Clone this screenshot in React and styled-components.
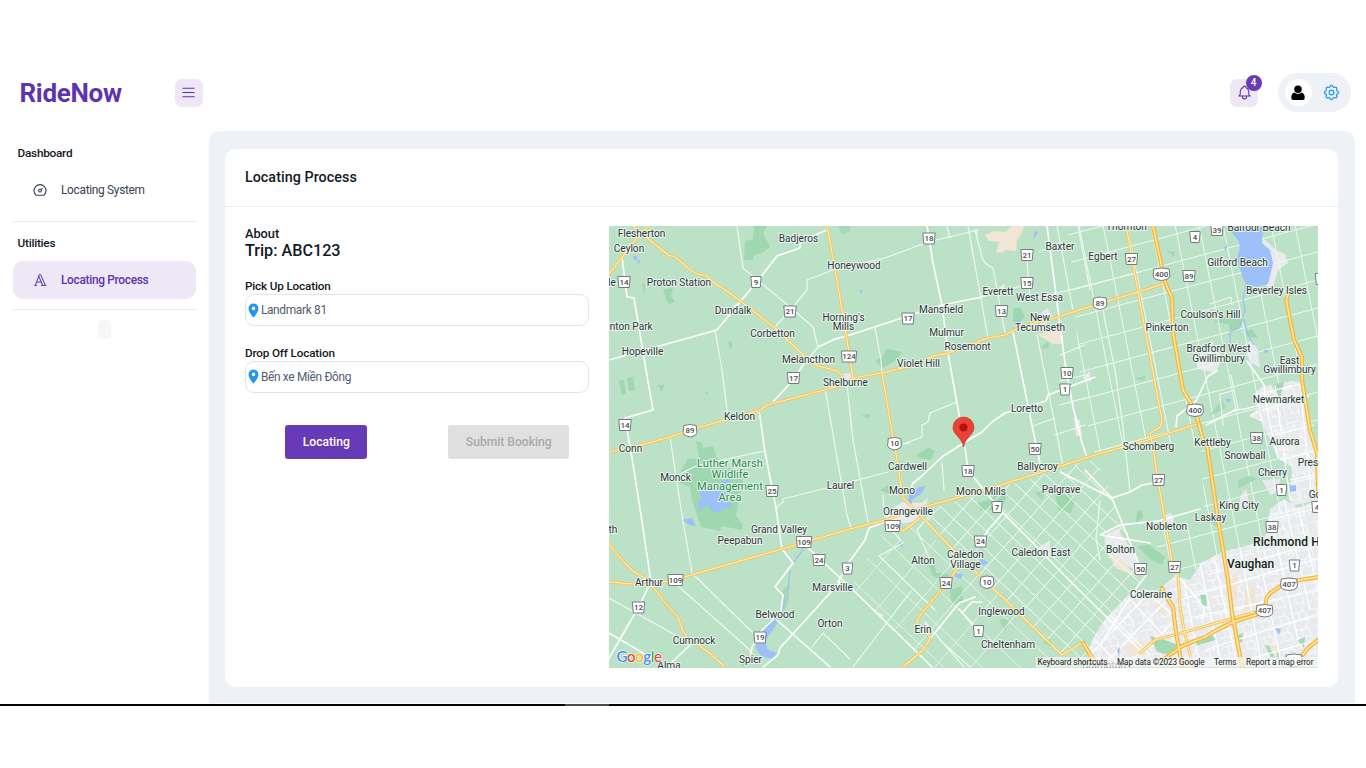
import React from "react";
import styled, { createGlobalStyle } from "styled-components";
import { TbMenu2, TbBell, TbSettings, TbDashboard, TbTypography } from "react-icons/tb";
import { MdLocationOn } from "react-icons/md";

const GlobalStyle = createGlobalStyle`
  *, *::before, *::after { box-sizing: border-box; }
  body { margin: 0; background: #fff; font-family: Roboto, "Liberation Sans", sans-serif; color: #121926; }
  h1, h2, h3, p { margin: 0; }
  button { font-family: inherit; border: 0; padding: 0; }
`;

const Screen = styled.div`
  width: 1366px;
  height: 768px;
  overflow: hidden;
  padding-top: 54px;
  display: flex;
  flex-direction: column;
  background: #fff;
`;
const Header = styled.header`
  height: 77.4px;
  flex: none;
  display: flex;
  align-items: center;
  padding: 0 15px 0 19.5px;
`;
const Brand = styled.h1`
  width: 155px;
  font-size: 26px;
  line-height: 30px;
  font-weight: 700;
  letter-spacing: -0.3px;
  color: #5e35b1;
`;
const IconButton = styled.button`
  position: relative;
  width: 28px;
  height: 28px;
  border-radius: 7px;
  background: #ede7f6;
  color: #5e35b1;
  display: flex;
  align-items: center;
  justify-content: center;
`;
const Spacer = styled.div`flex: 1;`;
const Badge = styled.span`
  position: absolute;
  top: -4px;
  right: -3.5px;
  width: 16px;
  height: 16px;
  border-radius: 50%;
  background: #673ab7;
  color: #fff;
  font-size: 10px;
  line-height: 16px;
  font-weight: 500;
  text-align: center;
`;
const Profile = styled.div`
  width: 73.5px;
  height: 39px;
  margin-left: 19.5px;
  padding: 0 10.5px 0 7px;
  border-radius: 20px;
  background: #eef2f6;
  color: #2196f3;
  display: flex;
  align-items: center;
  justify-content: space-between;
`;
const Avatar = styled.div`
  width: 27px;
  height: 27px;
  border-radius: 50%;
  background: #fff;
  display: grid;
  place-items: center;
`;
const Body = styled.div`
  height: 572.6px;
  flex: none;
  display: flex;
`;
const Sidebar = styled.nav`
  width: 209px;
  flex: none;
  display: flex;
  flex-direction: column;
  padding: 13px 13px 0;
`;
const GroupTitle = styled.h3`
  font-size: 11.8px;
  line-height: 18px;
  font-weight: 500;
  letter-spacing: -0.25px;
  padding-left: 4.5px;
  color: #121926;
`;
const NavItem = styled.a`
  height: 38px;
  margin-top: 9px;
  padding-left: 19px;
  border-radius: 10px;
  display: flex;
  align-items: center;
  gap: 13px;
  font-size: 11.9px;
  letter-spacing: -0.31px;
  font-weight: ${(p) => (p.$active ? 500 : 400)};
  color: ${(p) => (p.$active ? "#5e35b1" : "#364152")};
  background: ${(p) => (p.$active ? "#ede7f6" : "transparent")};
`;
const Divider = styled.hr`
  width: 100%;
  height: 1px;
  border: 0;
  margin: ${(p) => p.$top}px 0 12px;
  background: #e6ebf1;
`;
const Chip = styled.span`
  width: 13px;
  height: 19px;
  margin: -2.5px 0 0 85px;
  border-radius: 5px;
  background: #f7f7f7;
`;
const Main = styled.main`
  width: 1145.6px;
  height: 572px;
  border-radius: 10px 10px 0 0;
  background: #eef2f6;
  padding: 17.2px 17px 0 16.3px;
`;
const Card = styled.section`
  height: 538.5px;
  border-radius: 10px;
  background: #fff;
  overflow: hidden;
`;
const CardHeader = styled.div`
  height: 58.5px;
  padding: 0 19.6px;
  border-bottom: 1px solid #e9eef4;
  display: flex;
  align-items: center;
`;
const CardTitle = styled.h2`
  font-size: 14.3px;
  font-weight: 500;
  letter-spacing: 0.06px;
`;
const CardBody = styled.div`
  display: flex;
  padding: 19px 19px 0 19.6px;
  gap: 19.5px;
`;
const Form = styled.div`
  width: 344.5px;
  flex: none;
`;
const About = styled.p`
  font-size: 12.8px;
  line-height: 16px;
  font-weight: 500;
`;
const Trip = styled.h3`
  font-size: 16.2px;
  line-height: 17px;
  font-weight: 500;
`;
const Field = styled.div`margin-top: ${(p) => p.$top}px;`;
const Label = styled.label`
  display: block;
  font-size: 11.7px;
  line-height: 15px;
  font-weight: 500;
  letter-spacing: -0.14px;
`;
const Input = styled.div`
  height: 32px;
  border: 1px solid #e3e5e8;
  border-radius: 9px;
  display: flex;
  align-items: center;
  font-size: 11.9px;
  letter-spacing: -0.32px;
  color: #525b6b;
  svg { color: #2196f3; margin: 0 -1px 0 -1px; }
`;
const Actions = styled.div`
  display: flex;
  gap: 81px;
  margin: 32px 0 0 40.4px;
`;
const Button = styled.button`
  width: ${(p) => p.$width}px;
  height: 34.5px;
  border-radius: 3px;
  font-size: 12.1px;
  font-weight: 500;
  color: ${(p) => (p.disabled ? "#a9a9a9" : "#fff")};
  background: ${(p) => (p.disabled ? "#e0e0e0" : "#673ab7")};
`;
const MapFrame = styled.div`
  width: 709.5px;
  height: 441.5px;
  overflow: hidden;
  svg { display: block; }
`;
const Taskbar = styled.div`
  height: 2px;
  flex: none;
  background: #050505;
  padding-left: 565px;
`;
const TaskbarMark = styled.div`
  width: 44px;
  height: 2px;
  background: #4b4e4e;
`;

const highways = [
  "M633 226L647 238L668 255L675 257L681 262L690 270L698 274L707 276L715 284L727 291L752 310L775 328L800 352L812 363L818 366L838 371L842 376L843 385",
  "M648 226L636 239L609 274",
  "M827 226L837 280L847 340L853 378",
  "M609 452L637 446L670 437L690 430L728 419L757 411L762 409L767 405L843 385L853 378L882 373L898 369L912 366L933 356L948 353L988 338L1005 335L1022 326L1048 320L1095 305L1138 292L1166 283",
  "M882 373L893 438L895 447L903 498L913 508L921 516L960 557L995 590L1062 655L1080 644Q1084 643 1090 658",
  "M609 582L633 584L650 585L677 579L782 549L850 529L885 520L913 511L920 508L978 492L1042 472L1095 455L1148 440L1200 423",
  "M609 543L615 552L625 563L634 572L643 577L650 584L657 592L666 604L678 617L683 631L688 638L700 646L713 656L725 667",
  "M920 518L910 526L903 531L893 529",
  "M958 568L945 585L918 618L917 624L930 637L929 641L923 650L903 667",
  "M1127 230L1138 292L1162 420L1160 427L1150 433L1152 442L1158 480L1173 567L1178 573L1180 607L1184 630L1193 667",
  "M1140 653L1155 640L1185 632L1255 612",
];
const freeways = [
  "M1153 226L1165 282L1172 298L1173 333L1183 390L1195 410L1203 440L1207 445L1218 520L1228 580L1232 613L1242 667",
  "M1288 295Q1286 298 1287 304L1294 340L1302 357L1302 380L1310 430L1317 453L1318 490",
  "M1163 660L1182 646L1205 637L1217 630L1233 622L1265 612L1266 601Q1267 594 1275 590L1285 583L1300 580L1318 577",
  "M1162 588L1165 595L1173 607L1176 632L1182 667",
  "M1083 643L1095 662",
  "M1301 657L1308 648L1318 640",
];
const roads = [
  "M622 257L627 297L634 298L646 370L653 410L625 418L632 458L641 515L651 582L638 608L609 658",
  "M609 360L717 330L740 302L760 278L777 256L800 248L801 241L827 230",
  "M818 347L835 339L850 335L902 318L942 305L982 297",
  "M803 365L794 379L773 402",
  "M759 410L765 452L776 508L782 549L793 563L775 587L783 595L781 612L762 630L752 647L751 655",
  "M807 547L850 587L932 667",
  "M840 582L780 648L778 655L763 667",
  "M777 620L830 667",
  "M927 226L933 263L942 305L948 353L960 420L963 443",
  "M1047 226L1065 363L1073 407L1082 443L1087 457",
  "M1013 332L1035 440L1042 472",
  "M1095 377L1048 395L1046 401L1005 413L992 422L982 432L965 442L942 457L922 476L913 483L909 493",
  "M965 447L968 470L992 500L1003 513L1025 535L1072 583L1140 650",
  "M1003 513L989 529L981 541",
  "M975 597L959 603L930 639M959 609L978 631M982 602L972 602L962 613",
  "M913 512L869 528L865 540L847 565L838 582",
  "M690 645L667 667M609 633L655 660",
  "M1206 425L1235 410L1245 409L1260 405M1176 427L1177 416L1196 401L1208 376L1217 371",
  "M1247 361L1264 385L1267 410M1060 472L1112 498L1140 567M1085 470L1112 498",
  "M1150 543L1100 535L1120 525L1158 521L1200 509M1146 575L1135 590L1100 645",
  "M1176 575L1190 590L1204 608L1203 618M1112 498L1130 492L1142 485L1159 482",
];
const lanes = [
  "M737 226L743 268L790 307L813 327L818 347L801 368",
  "M715 330L722 370L728 419",
  "M833 270L807 280L807 290L793 307L775 327",
  "M670 437L682 515L692 573L753 633",
  "M677 585L750 650L752 656",
  "M823 633L812 647M823 633L850 659",
  "M609 598L688 642",
  "M825 388L847 515L851 528",
  "M847 385L853 440L868 522",
  "M776 508L783 502L783 499L850 482L888 472",
  "M699 465L765 451M668 480L696 466",
  "M845 267L885 258L928 242L978 230M947 226L950 238",
  "M968 226L988 338M975 230L982 257Q984 264 993 268L1005 333",
  "M982 297L1032 283M1027 260L1030 300M1040 251L1070 243",
  "M1057 226L1073 310M1078 226L1090 290M1030 300L1140 272",
  "M957 402L930 413L928 422L922 425L922 437L903 444",
  "M1037 335L1058 440L1063 467M1033 426L1055 418M875 328L881 360L882 373",
  "M883 520L903 543L879 556L935 610M883 495L884 510L890 520M911 591L853 667",
  "M942 463L944 490M904 444L910 443M930 515L917 530L930 560M925 622L964 667M940 640L970 667",
  "M1102 296L1104 316L1115 370L1123 427L1130 492M1210 304L1231 297L1232 305",
  "M1220 394L1232 391M1220 395L1223 425M1231 375L1238 409M1100 500L1096 538L1100 560",
  "M1085 345L1060 355M1085 375L1060 381M1085 398L1060 405M1085 425L1055 435",
];
const streets = [
  "M1184 580L1200 667M1200 563L1222 667M1214 556L1236 660M1240 548L1262 667M1256 542L1282 667M1270 515L1298 640M1284 500L1310 610M1298 508L1318 590",
  "M1180 600L1318 558M1190 618L1318 590M1205 650L1318 614M1245 660L1318 640M1208 575L1318 542M1268 520L1318 508",
  "M1095 640L1122 667M1110 615L1150 655M1128 597L1165 637M1145 590L1178 620M1090 655L1150 592M1108 660L1165 602M1130 662L1178 618",
  "M1262 410L1310 396M1255 395L1304 383M1275 385L1290 500M1266 405L1278 458M1275 435L1314 425M1280 460L1318 450M1290 480L1318 474M1300 385L1312 500",
];

const series = (from, to, step, make) => {
  const out = [];
  for (let v = from; v <= to; v += step) out.push(make(v));
  return out.join("");
};
const caledonLines =
  series(925, 1130, 15, (x) => `M${x} ${790 - x * 0.302}l220 208`) +
  series(990, 1370, 25, (x) => `M${x} 450l-230 260`);
const erinLines =
  series(740, 930, 38, (x) => `M${x} 510l190 180`) +
  series(900, 1080, 36, (x) => `M${x} 540l-120 140`);
const simcoeLines =
  series(1060, 1340, 24, (x) => `M${x - 6} 220l70 350`) +
  series(240, 700, 28, (y) => `M1050 ${y}l290 -78`);

const towns = [
  "M1085 667L1092 640L1105 619L1133 590L1158 590L1175 576L1190 580L1201 563L1222 552L1250 545L1266 535L1270 509L1284 499L1298 508L1318 500V667Z",
  "M1261 387L1292 381L1303 382L1311 425L1318 450V500L1290 506L1292 467L1278 458L1262 422L1249 416L1259 408L1253 395Z",
  "M892 509L902 502L922 503L928 497L926 509L913 522L886 525L884 514Z",
  "M1108 533L1119 528L1121 535L1138 558L1136 570L1109 558L1104 540Z",
  "M1196 361L1204 351L1217 346L1222 358L1216 373L1198 369Z",
  "M1262 237L1276 250L1285 254L1288 263L1278 270L1273 288L1266 286Z",
  "M841 374L853 373L857 380L849 386L841 383Z",
  "M1164 515L1171 513L1174 519L1170 531L1162 529ZM1244 345L1252 340L1258 350L1260 368L1250 362Z",
  "M732 306L737 303L740 309ZM973 230L978 229V235ZM998 288L1005 284L1004 293ZM1040 314L1047 308L1054 319L1040 327ZM1082 378L1090 371L1091 382ZM1074 419L1080 420L1082 435L1076 436ZM877 612L883 614L882 619Z",
  "M1240 497L1246 489L1249 502L1240 512ZM1034 551L1050 540V557ZM1262 480L1280 479L1279 492L1270 495Z",
];
const sand = [
  "M985 235L994 231L1005 232L1012 226H1025L1021 234L1017 240L1016 251L1005 250L1003 253L996 252L999 242L989 241Z",
  "M1037 334L1050 332L1056 329L1063 337L1061 344L1053 344Z",
  "M1206 345L1213 340L1214 348L1204 352Z",
  "M1109 553L1120 557L1130 570L1138 577L1115 568Z",
  "M1232 575L1238 570L1237 602L1230 600ZM1245 590L1256 586L1254 605L1244 613ZM1157 602L1164 606L1166 616L1159 612Z",
  "M1123 647L1140 640L1150 653L1130 657ZM1268 644L1278 648L1276 660ZM1287 439L1300 436L1297 450Z",
];
const forest = [
  "M745 241L753 239L754 226H767L763 234L770 247L762 253L754 255L752 260H744Z",
  "M696 441L702 443L703 448L713 446L717 458L728 468L745 470L742 485L736 515L743 525L742 530L722 526L720 531L701 527L697 515L692 500L690 487L680 483L679 474L688 459L699 458Z",
  "M619 381L624 380L626 394L622 395ZM627 378L633 377L635 390L629 391ZM658 386L664 384L662 392Z",
  "M663 290L673 287L671 296L675 302L668 304ZM642 282L645 285L644 296ZM728 341L732 342V349L729 348Z",
  "M875 361L883 356L887 349L902 352L898 359L883 368Z",
  "M917 455L925 450L928 447L935 451L931 460L920 458ZM880 490L888 485L889 494Z",
  "M978 503L990 499L1003 491L1006 499L998 510L980 510Z",
  "M1055 495L1065 492L1075 500L1071 513L1058 510ZM1035 493L1046 490L1042 500Z",
  "M929 564L935 566L936 573L949 574V584L932 575ZM950 590L962 586L963 602L952 606Z",
  "M1013 309L1020 307L1025 317L1018 325L1013 322ZM1043 345L1048 342L1049 348L1042 349Z",
  "M1213 322L1222 317L1237 316L1246 320L1237 330L1229 331V324ZM1245 332L1252 329L1258 338L1248 337Z",
  "M1137 546L1149 545L1165 557L1162 565L1150 559ZM1137 512L1142 510L1143 518L1136 523Z",
  "M1150 636L1165 640L1178 645L1170 655L1157 652ZM1195 640L1212 635L1216 640L1195 646Z",
  "M762 628L770 621L778 615L782 608L783 590L790 584L788 602L780 620L766 639L757 634Z",
  "M1249 476L1257 479L1248 483L1238 488L1239 480ZM1222 400L1226 408L1210 415ZM1209 522L1221 516L1219 527Z",
  "M1265 645L1277 647L1280 660H1272ZM1200 595L1206 595L1207 606L1202 605ZM1233 637L1243 633L1242 643ZM1272 385L1284 382L1280 399ZM1298 640L1305 637L1304 648Z",
  "M1135 379L1145 376L1144 381ZM1166 250L1175 252L1174 257ZM1042 643L1050 639L1051 646ZM999 620L1010 619L1005 630ZM838 226H850V231L842 234ZM862 415L870 414L869 419ZM740 654L745 656L744 667L739 662Z",
];
const water = [
  "M1232 226L1230 230L1238 240L1240 247L1237 258L1239 266L1243 278L1246 284L1258 287L1268 284L1271 272L1273 263L1270 250L1262 243L1263 226Z",
  "M697 489L706 490L709 484L714 487L720 483L726 478L731 482L725 489L729 500L732 507L724 508L719 513L711 510L707 504L700 511L698 504L702 498Z",
  "M681 520L692 518L696 526L690 525Z",
  "M908 500L910 491L920 487L926 486L921 494L913 499L911 505Z",
  "M776 620L781 611L786 595L785 604L774 628L766 639L767 649L777 653L772 659L761 656L755 647L759 641L765 628Z",
  "M980 558L988 562L984 566L979 564ZM956 573L963 574L961 579L955 577ZM900 541L903 543L902 547L899 545Z",
  "M1014 317L1020 321L1018 324ZM636 259L640 261L639 264ZM1225 399L1231 399L1229 403ZM1290 486L1296 485L1296 491L1290 492ZM1117 650L1120 647L1119 657ZM1264 350L1269 350L1265 354ZM1224 248L1228 244L1226 251Z",
  "M1035 230L1038 233L1033 240ZM860 290h2v3h-2ZM633 256h4v4h-3ZM705 391l3 2l-1 2ZM742 318l-3 3ZM1275 628l6 1l-2 6ZM688 475l4 1l-1 3Z",
];

const shields = [
  ["14", 624, 282], ["9", 756, 282], ["21", 790, 311.5], ["18", 929, 238.5], ["21", 1027, 255], ["27", 1131.5, 259],
  ["4", 1195, 237], ["39", 1217, 230], ["400", 1161.5, 274, 1], ["89", 1189, 276], ["15", 1027, 283], ["13", 1001.5, 311],
  ["17", 908, 318.5], ["89", 1100, 303, 1], ["124", 849, 356.5], ["17", 793.5, 378], ["10", 1067, 373], ["1", 1065, 389.5],
  ["400", 1195, 410, 1], ["14", 625, 425], ["89", 690, 430.5, 1], ["10", 894.5, 443.5, 1], ["50", 1035, 449], ["38", 1256.5, 438],
  ["18", 968, 471], ["25", 772, 491], ["7", 997, 507], ["27", 1158.5, 480], ["1", 1281.5, 490], ["109", 892.5, 526],
  ["109", 804, 542], ["24", 980.5, 541.5], ["38", 1272, 527], ["24", 819, 560], ["3", 847.5, 568.5], ["109", 675.5, 580],
  ["24", 946, 583], ["10", 987, 582, 1], ["50", 1140.5, 569], ["27", 1174.5, 567], ["1", 1294.5, 565.5], ["407", 1289, 584, 1],
  ["12", 638.5, 607.5], ["407", 1264.5, 610.5, 1], ["19", 760, 637.5], ["1", 978.5, 631], ["4", 1317, 507], ["", 1323, 279], ["", 1294, 660, 1],
];

const places = [
  ["Flesherton", 641.5, 237], ["Ceylon", 629, 252], ["Badjeros", 798.5, 241.5], ["Honeywood", 854, 269.2],
  ["Proton Station", 679, 286.2], ["le", 612, 285.5], ["Dundalk", 733, 314.3], ["inton Park", 630, 329.6], ["Hopeville", 642.5, 355.3],
  ["Corbetton", 772.5, 337], ["Horning's", 843.5, 320.8], ["Mills", 843.5, 330.4], ["Melancthon", 808.5, 363.4], ["Shelburne", 845.5, 386.2],
  ["Mansfield", 941, 312.6], ["Mulmur", 946.5, 335.7], ["Rosemont", 967.5, 350.2], ["Violet Hill", 918.5, 366.7],
  ["Everett", 998, 295.2], ["West Essa", 1039.5, 301], ["New", 1040, 321.2], ["Tecumseth", 1040, 330.8], ["Baxter", 1060, 249.7],
  ["Egbert", 1103, 260.2], ["Thornton", 1126.5, 230], ["Balfour Beach", 1259, 231.2], ["Gilford Beach", 1237.5, 265.6],
  ["Beverley Isles", 1276.5, 293.5], ["Coulson's Hill", 1210.5, 317.8], ["Pinkerton", 1167, 331.2], ["Bradford West", 1218.5, 352.3],
  ["Gwillimbury", 1218.5, 361.8], ["East", 1289.5, 363.8], ["Gwillimbury", 1289.5, 373.3], ["Newmarket", 1278.5, 402.7], ["Loretto", 1027, 411.6],
  ["Keldon", 739.5, 419.8], ["Conn", 630.5, 451.9], ["Monck", 675.5, 480.6], ["Laurel", 840.5, 489.3], ["Cardwell", 907.5, 469.6],
  ["Mono", 902, 494.3], ["Mono Mills", 981, 495], ["Orangeville", 908, 515.3], ["Ballycroy", 1037.5, 469.6], ["Palgrave", 1061, 492.6],
  ["Schomberg", 1148.5, 450.2], ["Kettleby", 1212.5, 445.8], ["Aurora", 1284.5, 445.3], ["Snowball", 1245, 459.3], ["Cherry", 1272.5, 475.5],
  ["Pres", 1308, 466.2], ["King City", 1239, 508.7], ["Laskay", 1210.5, 521.3], ["Go", 1315, 498], ["Nobleton", 1166.5, 530],
  ["Bolton", 1120.5, 552.7], ["Caledon East", 1041, 556.2], ["Caledon", 965.5, 558.4], ["Village", 965.5, 568.1], ["Alton", 923, 564.2],
  ["Grand Valley", 779, 532.7], ["Peepabun", 740, 544.2], ["th", 613, 533], ["Arthur", 649, 586.3], ["Marsville", 832.5, 590.7],
  ["Belwood", 775, 617.8], ["Orton", 830, 627.2], ["Cumnock", 694, 643.9], ["Spier", 750.5, 662.9], ["Alma", 669, 668.5], ["Erin", 923, 632.8],
  ["Inglewood", 1001.5, 614.8], ["Cheltenham", 1008, 648.2], ["Coleraine", 1151, 597.6], ["Brampton", 1104, 669],
];

const Shield = ({ label, x, y, king }) => {
  const w = label.length === 2 ? 6.2 : label.length === 1 ? 5.2 : 7.7;
  return (
    <g transform={`translate(${x} ${y})`}>
      <path
        d={king
          ? `M${-w} -5Q0 -7 ${w} -5L${w + 0.7} 2Q${w} 5 ${w - 3} 5.6L0 6.5L${3 - w} 5.6Q${-w} 5 ${-w - 0.7} 2Z`
          : `M${-w} -5.5H${w}L${w - 1} 5.5H${1 - w}Z`}
        fill="#fff" stroke="#777b7f" strokeWidth="1"
      />
      <text y="2.9" textAnchor="middle" fontSize="8" fontWeight="500" fill="#4a4d50">{label}</text>
    </g>
  );
};

const draw = (list, props) => list.map((d, i) => <path key={i} d={d} {...props} />);
const halo = { stroke: "#e9f5ed", strokeWidth: 2, strokeLinejoin: "round", paintOrder: "stroke" };

const RouteMap = () => (
  <svg width="709.5" height="441.5" viewBox="609 226 709.5 441.5" fontFamily="Roboto, sans-serif">
    <defs>
      <pattern id="blocks" width="19" height="17" patternUnits="userSpaceOnUse" patternTransform="rotate(-13)">
        <path d="M0 5H11Q14 5 14 9V17M6 5V13H14M0 13H3M11 0V5" stroke="#fff" strokeWidth="0.8" fill="none" />
      </pattern>
      <clipPath id="caledon"><path d="M921 512L1095 458L1113 499L1146 575L1100 640L1090 667H1072L921 518Z" /></clipPath>
      <clipPath id="erin"><path d="M885 524L921 518L1062 656V668H930L850 587Z" /></clipPath>
      <clipPath id="simcoe"><path d="M1068 226H1319V668H1240L1180 570L1140 530L1205 520L1200 440L1095 455L1082 400Z" /></clipPath>
    </defs>
    <rect x="609" y="226" width="710" height="442" fill="#bbe2c6" />
    {draw(forest, { fill: "#9fd7b0" })}
    {draw(towns, { fill: "#e8eaed" })}
    <g clipPath="url(#simcoe)"><path d={simcoeLines} stroke="#eef8f1" strokeWidth="1" fill="none" /></g>
    {draw(towns.slice(0, 2), { fill: "url(#blocks)" })}
    {draw(forest.slice(12), { fill: "#a5d9b5" })}
    {draw(sand, { fill: "#f1e6d5" })}
    {draw(streets, { fill: "none", stroke: "#fff", strokeWidth: 1.2 })}
    <g clipPath="url(#caledon)"><path d={caledonLines} stroke="#f1faf4" strokeWidth="1" fill="none" /></g>
    <g clipPath="url(#erin)"><path d={erinLines} stroke="#e3f4e9" strokeWidth="1" fill="none" /></g>
    {draw(water, { fill: "#9dc0fa" })}
    <path d="M1246 284L1243 300L1245 310L1239 328L1230 332V347M1244 320L1248 335L1254 345M793 563L803 550V540M788 590L790 570" fill="none" stroke="#9dc0fa" strokeWidth="1.3" />
    <g fill="none" strokeLinejoin="round" strokeLinecap="round">
      {draw(lanes, { stroke: "#eef8f1", strokeWidth: 1.2 })}
      {draw(roads, { stroke: "#fff", strokeWidth: 1.6 })}
      {draw(highways, { stroke: "#f6c65f", strokeWidth: 3 })}
      {draw(highways, { stroke: "#ffedb5", strokeWidth: 1.1 })}
      {draw(freeways, { stroke: "#f5b63c", strokeWidth: 4.2 })}
      {draw(freeways, { stroke: "#ffe9a3", strokeWidth: 1.5 })}
    </g>
    {shields.map(([label, x, y, king], i) => <Shield key={i} label={label} x={x} y={y} king={king} />)}
    <g fontSize="10.1" fill="#2f3437" textAnchor="middle" {...halo}>
      {places.map(([name, x, y], i) => <text key={i} x={x} y={y}>{name}</text>)}
    </g>
    <g fontSize="11" fill="#1e8a4c" textAnchor="middle" letterSpacing="0.1" {...halo}>
      <text x="730" y="467">Luther Marsh</text>
      <text x="730" y="478.2">Wildlife</text>
      <text x="730" y="489.5">Management</text>
      <text x="730" y="500.8">Area</text>
    </g>
    <g fontSize="12" fontWeight="500" fill="#202124" {...halo}>
      <text x="1253" y="546" letterSpacing="0.1">Richmond H</text>
      <text x="1227" y="567.7">Vaughan</text>
    </g>
    <path d="M963.5 447C962 437 953 435 953 427.5A10.5 10.5 0 0 1 974 427.5C974 435 965 437 963.5 447Z" fill="#ea4335" stroke="#c5362b" strokeWidth="0.7" />
    <circle cx="963.5" cy="427.5" r="4.1" fill="#b31412" />
    <rect x="1036" y="657" width="283" height="10.5" fill="#f5f5f5" opacity="0.7" />
    <g fontSize="8.2" fill="#222">
      <text x="1037.5" y="665" textLength="70">Keyboard shortcuts</text>
      <text x="1117" y="665" textLength="87.5">Map data ©2023 Google</text>
      <text x="1214" y="665" textLength="22.5">Terms</text>
      <text x="1246" y="665" textLength="67.5">Report a map error</text>
    </g>
    <text x="616.5" y="661.5" fontSize="15" fontWeight="500" textLength="45.5" stroke="#fff" strokeWidth="1.2" paintOrder="stroke" fontFamily="Lato, sans-serif">
      <tspan fill="#4285f4">G</tspan><tspan fill="#ea4335">o</tspan><tspan fill="#fbbc04">o</tspan><tspan fill="#4285f4">g</tspan><tspan fill="#34a853">l</tspan><tspan fill="#ea4335">e</tspan>
    </text>
  </svg>
);

const LocationField = ({ label, value, top }) => (
  <Field $top={top}>
    <Label>{label}</Label>
    <Input><MdLocationOn size={17} />{value}</Input>
  </Field>
);

export default function App() {
  return (
    <Screen>
      <GlobalStyle />
      <Header>
        <Brand>RideNow</Brand>
        <IconButton aria-label="Menu"><TbMenu2 size={17} strokeWidth={1.5} /></IconButton>
        <Spacer />
        <IconButton aria-label="Notifications">
          <TbBell size={17} strokeWidth={1.5} />
          <Badge>4</Badge>
        </IconButton>
        <Profile>
          <Avatar>
            <svg width="14" height="16" viewBox="0 0 15 17">
              <circle cx="7.5" cy="4.5" r="4" />
              <path d="M3.5 8Q7.5 11 11.5 8Q14.8 9.3 14.7 13.5Q14.8 16 12.5 16H2.5Q.2 16 .3 13.5Q.2 9.3 3.5 8Z" />
            </svg>
          </Avatar>
          <TbSettings size={19} strokeWidth={1.5} />
        </Profile>
      </Header>
      <Body>
        <Sidebar>
          <GroupTitle>Dashboard</GroupTitle>
          <NavItem><TbDashboard size={16} strokeWidth={1.6} />Locating System</NavItem>
          <Divider $top={11.5} />
          <GroupTitle>Utilities</GroupTitle>
          <NavItem $active><TbTypography size={16} strokeWidth={1.5} />Locating Process</NavItem>
          <Divider $top={10.5} />
          <Chip />
        </Sidebar>
        <Main>
          <Card>
            <CardHeader><CardTitle>Locating Process</CardTitle></CardHeader>
            <CardBody>
              <Form>
                <About>About</About>
                <Trip>Trip: ABC123</Trip>
                <LocationField label="Pick Up Location" value="Landmark 81" top={20.4} />
                <LocationField label="Drop Off Location" value="Bến xe Miền Đông" top={19.5} />
                <Actions>
                  <Button $width={82}>Locating</Button>
                  <Button $width={121} disabled>Submit Booking</Button>
                </Actions>
              </Form>
              <MapFrame><RouteMap /></MapFrame>
            </CardBody>
          </Card>
        </Main>
      </Body>
      <Taskbar><TaskbarMark /></Taskbar>
    </Screen>
  );
}
